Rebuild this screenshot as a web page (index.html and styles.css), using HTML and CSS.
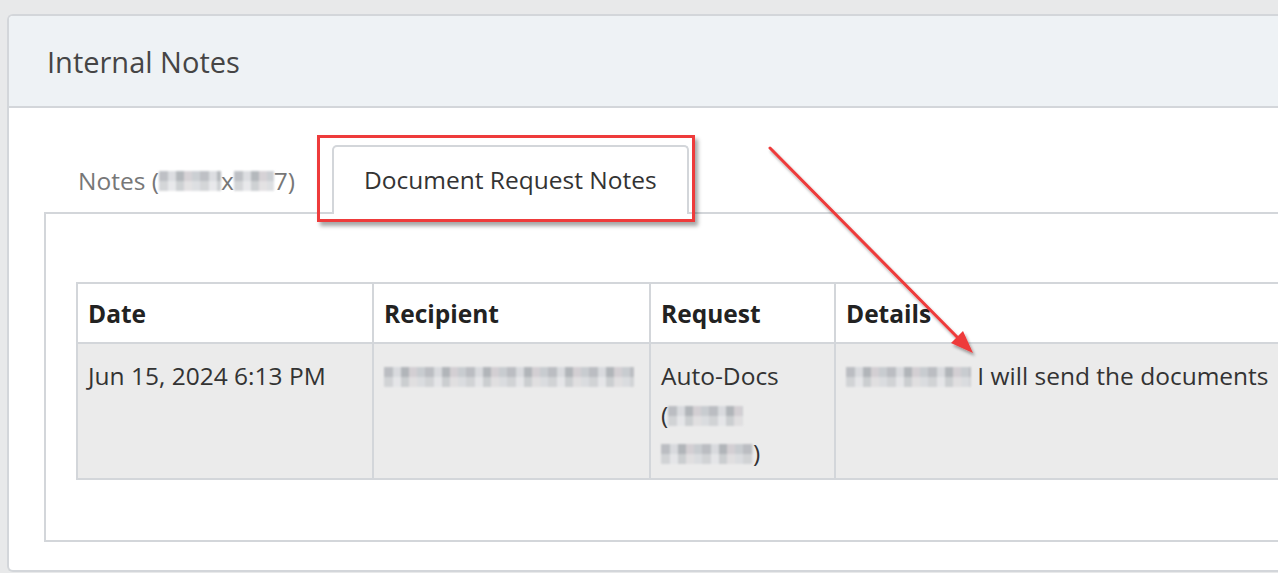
FILE: index.html
```html
<!DOCTYPE html>
<html lang="en">

<head>
  <meta charset="utf-8" />
  <title>Internal Notes</title>
  <link rel="stylesheet" href="styles.css">
</head>

<body>
  <div class="card">
    <div class="card-header">
      <h2>Internal Notes</h2>
    </div>

    <div class="card-body">
      <ul class="tabs">
        <li class="tab">Notes (<span class="blur w62">xxxxxx</span>x<span class="blur w40">xx</span>7)</li>
        <li class="tab active">
          Document Request Notes
          <span class="mark-box"></span>
        </li>
      </ul>

      <div class="tab-pane">
        <table>
          <colgroup>
            <col class="col-date">
            <col class="col-recipient">
            <col class="col-request">
            <col class="col-details">
          </colgroup>
          <tr>
            <th>Date</th>
            <th>Recipient</th>
            <th>Request</th>
            <th>Details</th>
          </tr>
          <tr class="row">
            <td>Jun 15, 2024 6:13 PM</td>
            <td><span class="blur w250">xxxxxxxxxxxxxxxx</span></td>
            <td>
              Auto-Docs<br>
              (<span class="blur w75">xxxxx</span><br>
              <span class="blur w92">xxxxxx</span>)
            </td>
            <td><span class="blur w125">xxxxxxxxx</span> I will send the documents</td>
          </tr>
        </table>
      </div>
    </div>
  </div>

  <svg class="arrow" width="1278" height="573" viewBox="0 0 1278 573">
    <defs>
      <filter id="sh" x="-20%" y="-20%" width="140%" height="140%">
        <feDropShadow dx="2" dy="3" stdDeviation="1.5" flood-color="#000" flood-opacity="0.35" />
      </filter>
    </defs>
    <g filter="url(#sh)">
      <line x1="770" y1="148" x2="962" y2="342" stroke="#ee3b3b" stroke-width="3" stroke-linecap="round" />
      <polygon points="973,353 951,343 963,331" fill="#ee3b3b" />
    </g>
  </svg>
</body>

</html>
```

FILE: styles.css
```css
body {
  margin: 0;
  padding: 14px 0 0 7px;
  background-color: #e8e9ea;
  font-family: "Open Sans", "Noto Sans", sans-serif;
  color: #333;
  overflow: hidden;
  height: 573px;
  box-sizing: border-box;
}

.card {
  width: 1400px;
  background-color: #fff;
  border: 2px solid #d3d6da;
  border-right: none;
  border-radius: 6px 0 0 6px;
  overflow: hidden;
}

.card-header {
  height: 90px;
  background-color: #eef2f5;
  border-bottom: 2px solid #d3d6da;
  display: flex;
  align-items: center;
  padding-left: 38px;
}

.card-header h2 {
  margin: 0;
  font-size: 29px;
  font-weight: 400;
  color: #454545;
}

.card-body {
  padding: 37px 0 28px 35px;
}

.tabs {
  list-style: none;
  margin: 0;
  padding: 0;
  display: flex;
  align-items: flex-end;
}

.tab {
  position: relative;
  height: 69px;
  box-sizing: border-box;
  padding: 0 32px;
  display: flex;
  align-items: center;
  font-size: 24.5px;
  color: #777;
  margin-bottom: -2px;
  border: 2px solid transparent;
  border-bottom: none;
}

.tab.active {
  color: #333;
  background-color: #fff;
  border-color: #d3d6da;
  border-radius: 5px 5px 0 0;
  padding: 0 30px 2px;
  margin-left: 3px;
}

.mark-box {
  position: absolute;
  left: -17px;
  top: -12px;
  right: -8px;
  bottom: -8px;
  border: 3px solid #ee3b3b;
  box-shadow: 3px 4px 4px rgba(0, 0, 0, 0.35);
}

.tab-pane {
  border: 2px solid #d3d6da;
  border-right: none;
  padding: 68px 0 60px 30px;
}

table {
  border-collapse: collapse;
  table-layout: fixed;
  width: 1300px;
  font-size: 24.5px;
}

.col-date {
  width: 296px;
}

.col-recipient {
  width: 277px;
}

.col-request {
  width: 185px;
}

th,
td {
  border: 2px solid #d3d6da;
  text-align: left;
  vertical-align: top;
  padding: 0 10px;
  white-space: nowrap;
}

th {
  height: 58px;
  vertical-align: middle;
  font-weight: 700;
  color: #222;
}

.row td {
  background-color: #ebebeb;
  height: 136px;
  line-height: 38.5px;
  padding-top: 13px;
  box-sizing: border-box;
}

.blur {
  display: inline-block;
  color: transparent;
  background:
    linear-gradient(180deg, rgba(255, 255, 255, 0) 50%, rgba(255, 255, 255, 0.35) 50%),
    repeating-linear-gradient(90deg, #b3b6bb 0 9px, #d6d8dc 9px 17px, #a8acb1 17px 25px, #cfcbcf 25px 33px, #c3c7cc 33px 41px);
  filter: blur(1px);
  height: 20px;
  vertical-align: -2px;
  overflow: hidden;
  opacity: 0.85;
}

.w40 { width: 40px; }
.w62 { width: 62px; }
.w75 { width: 75px; }
.w92 { width: 92px; }
.w125 { width: 125px; }
.w250 { width: 250px; }

.arrow {
  position: absolute;
  left: 0;
  top: 0;
  pointer-events: none;
}
```
